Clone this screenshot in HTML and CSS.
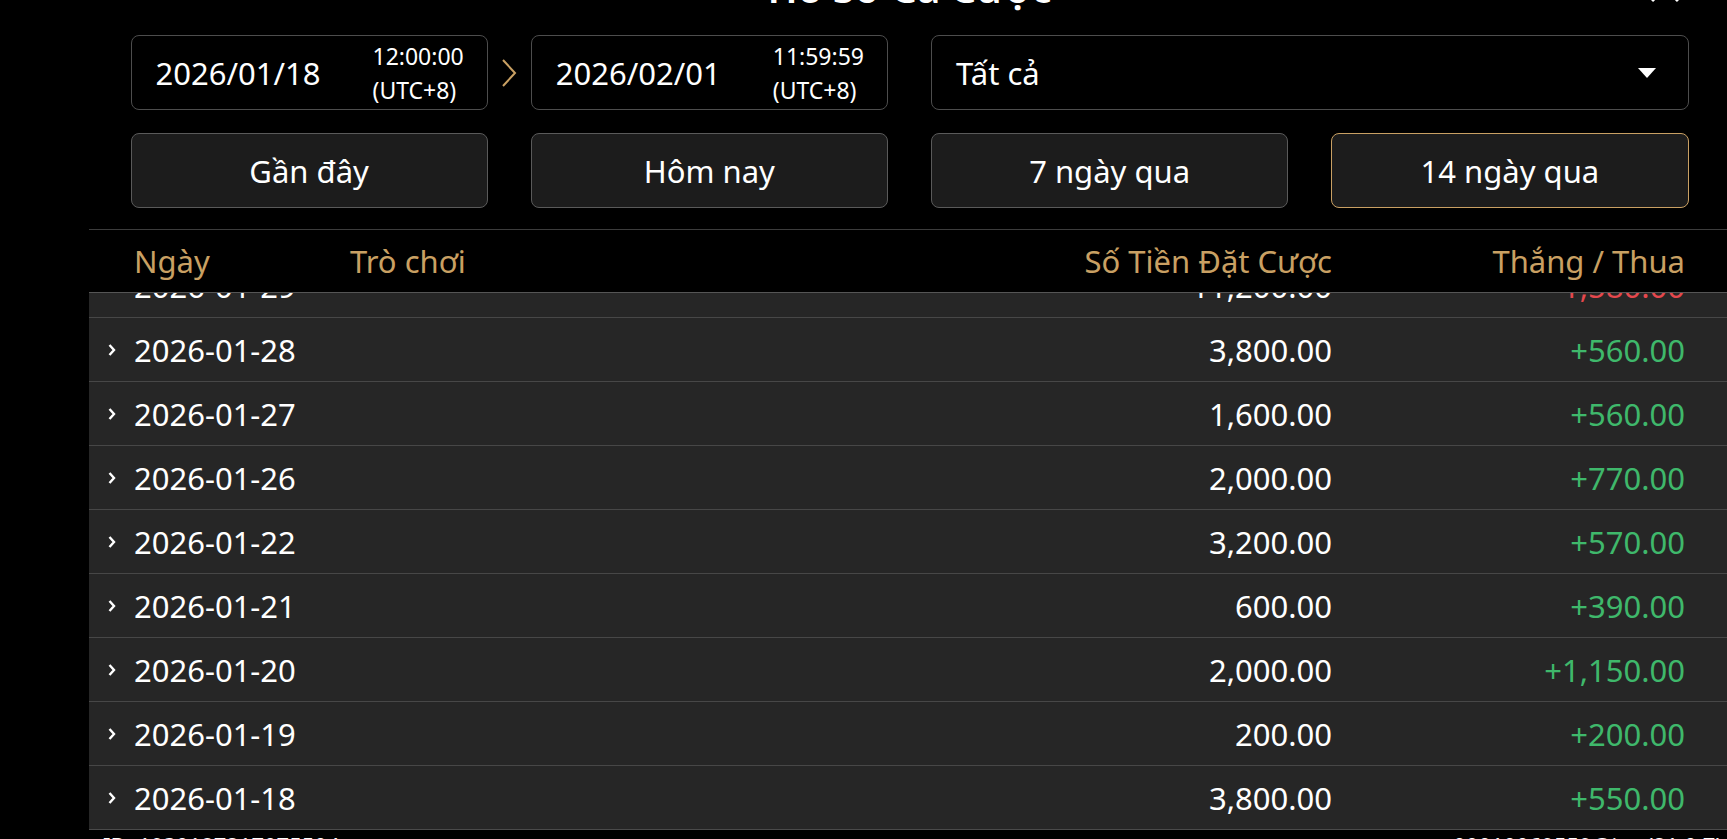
FILE: index.html
```html
<!DOCTYPE html>
<html lang="vi">
  <head>
    <meta charset="UTF-8" />
    <meta name="viewport" content="width=device-width, initial-scale=1.0" />
    <title>Hồ Sơ Cá Cược</title>
    <link rel="stylesheet" href="styles.css">
  </head>
  <body>
    <div class="sheet">
      <div class="head">
        <h1 class="title">Hồ Sơ Cá Cược</h1>
        <svg class="close" viewBox="0 0 32 32"><path d="M3 3L29 29M29 3L3 29" /></svg>
      </div>

      <!-- filtros -->
      <div class="filters">
        <div class="datebox">
          <span class="date">2026/01/18</span>
          <span class="time">12:00:00<br />(UTC+8)</span>
        </div>
        <div class="datebox">
          <svg class="arrow" viewBox="0 0 16 28"><path d="M2 1L14 14L2 27" /></svg>
          <span class="date">2026/02/01</span>
          <span class="time">11:59:59<br />(UTC+8)</span>
        </div>
        <div class="select">
          <span>Tất cả</span>
          <span class="caret"></span>
        </div>
        <button class="range">Gần đây</button>
        <button class="range">Hôm nay</button>
        <button class="range">7 ngày qua</button>
        <button class="range active">14 ngày qua</button>
      </div>

      <!-- tabla -->
      <div class="table">
        <div class="thead cols">
          <span></span>
          <span>Ngày</span>
          <span>Trò chơi</span>
          <span class="num">Số Tiền Đặt Cược</span>
          <span class="num">Thắng / Thua</span>
        </div>
        <div class="tbody">
          <div class="rows">
            <div class="row cols">
              <svg class="chev" viewBox="0 0 8 14"><path d="M1.5 2L6 7L1.5 12" /></svg>
              <span>2026-01-29</span><span></span>
              <span class="num">11,200.00</span><span class="num loss">-1,580.00</span>
            </div>
            <div class="row cols">
              <svg class="chev" viewBox="0 0 8 14"><path d="M1.5 2L6 7L1.5 12" /></svg>
              <span>2026-01-28</span><span></span>
              <span class="num">3,800.00</span><span class="num win">+560.00</span>
            </div>
            <div class="row cols">
              <svg class="chev" viewBox="0 0 8 14"><path d="M1.5 2L6 7L1.5 12" /></svg>
              <span>2026-01-27</span><span></span>
              <span class="num">1,600.00</span><span class="num win">+560.00</span>
            </div>
            <div class="row cols">
              <svg class="chev" viewBox="0 0 8 14"><path d="M1.5 2L6 7L1.5 12" /></svg>
              <span>2026-01-26</span><span></span>
              <span class="num">2,000.00</span><span class="num win">+770.00</span>
            </div>
            <div class="row cols">
              <svg class="chev" viewBox="0 0 8 14"><path d="M1.5 2L6 7L1.5 12" /></svg>
              <span>2026-01-22</span><span></span>
              <span class="num">3,200.00</span><span class="num win">+570.00</span>
            </div>
            <div class="row cols">
              <svg class="chev" viewBox="0 0 8 14"><path d="M1.5 2L6 7L1.5 12" /></svg>
              <span>2026-01-21</span><span></span>
              <span class="num">600.00</span><span class="num win">+390.00</span>
            </div>
            <div class="row cols">
              <svg class="chev" viewBox="0 0 8 14"><path d="M1.5 2L6 7L1.5 12" /></svg>
              <span>2026-01-20</span><span></span>
              <span class="num">2,000.00</span><span class="num win">+1,150.00</span>
            </div>
            <div class="row cols">
              <svg class="chev" viewBox="0 0 8 14"><path d="M1.5 2L6 7L1.5 12" /></svg>
              <span>2026-01-19</span><span></span>
              <span class="num">200.00</span><span class="num win">+200.00</span>
            </div>
            <div class="row cols">
              <svg class="chev" viewBox="0 0 8 14"><path d="M1.5 2L6 7L1.5 12" /></svg>
              <span>2026-01-18</span><span></span>
              <span class="num">3,800.00</span><span class="num win">+550.00</span>
            </div>
          </div>
        </div>
      </div>

      <div class="footer">
        <span>ID: 1930187217075504</span>
        <span>00010069559@ios (21.0.7)</span>
      </div>
    </div>
  </body>
</html>
```

FILE: styles.css
```css
body {
  margin: 0;
  height: 839px;
  overflow: hidden;
  background: #000;
  color: #fff;
  font-family: "Noto Sans", "Open Sans", sans-serif;
}

.sheet {
  width: 1641px;
  margin-left: 89px;
}

/* titulo cortado arriba */
.head {
  position: relative;
  display: flex;
  justify-content: center;
  align-items: flex-start;
  height: 35px;
}
.title {
  margin: -39px 0 0;
  font-size: 40px;
  line-height: 54px;
  font-weight: 600;
}
.close {
  position: absolute;
  right: 49px;
  top: -28px;
  width: 32px;
  height: 32px;
  fill: none;
  stroke: #fff;
  stroke-width: 3;
}

.filters {
  display: grid;
  grid-template-columns: repeat(4, 1fr);
  grid-auto-rows: 75px;
  column-gap: 43px;
  row-gap: 23px;
  padding: 0 41.5px;
}

.datebox {
  position: relative;
  display: flex;
  align-items: center;
  justify-content: space-between;
  padding: 0 23px 0 24px;
  border: 1px solid #4d4d4d;
  border-radius: 8px;
  background: #000;
}
.date {
  font-size: 31px;
}
.time {
  font-size: 23px;
  line-height: 34px;
  text-align: left;
}
.arrow {
  position: absolute;
  left: -31px;
  top: 23px;
  width: 16px;
  height: 28px;
  fill: none;
  stroke: #c9a063;
  stroke-width: 2;
}

.select {
  grid-column: span 2;
  display: flex;
  align-items: center;
  justify-content: space-between;
  padding: 0 32px 0 24px;
  border: 1px solid #4d4d4d;
  border-radius: 8px;
  font-size: 31px;
}
.caret {
  width: 0;
  height: 0;
  border-left: 9px solid transparent;
  border-right: 9px solid transparent;
  border-top: 10px solid #fff;
}

.range {
  font-family: inherit;
  font-size: 31px;
  color: #fff;
  background: #1c1c1c;
  border: 1px solid #5a5a5a;
  border-radius: 8px;
  padding: 0;
}
.range.active {
  border-color: #c9a063;
}

/* tabla */
.table {
  margin-top: 21px;
}
.cols {
  display: grid;
  grid-template-columns: 26px 216px 1fr 330px 353px;
  align-items: center;
  padding: 0 45px 0 19px;
  font-size: 31px;
}
.thead {
  box-sizing: border-box;
  height: 64px;
  border-top: 1px solid #3c3c3c;
  border-bottom: 1px solid #555;
  color: #c9a063;
}
.tbody {
  height: 536px;
  overflow: hidden;
  background: #262626;
}
.rows {
  margin-top: -40px;
}
.row {
  box-sizing: border-box;
  height: 64px;
  border-top: 1px solid #474747;
}
.chev {
  width: 8px;
  height: 14px;
  fill: none;
  stroke: #fff;
  stroke-width: 2.4;
}
.num {
  text-align: right;
}
.win {
  color: #3fb86b;
}
.loss {
  color: #e5484d;
}

.footer {
  display: flex;
  justify-content: space-between;
  padding: 0 8px 0 14px;
  border-top: 1px solid #4a4a4a;
  font-size: 22px;
  line-height: 30px;
}
```
